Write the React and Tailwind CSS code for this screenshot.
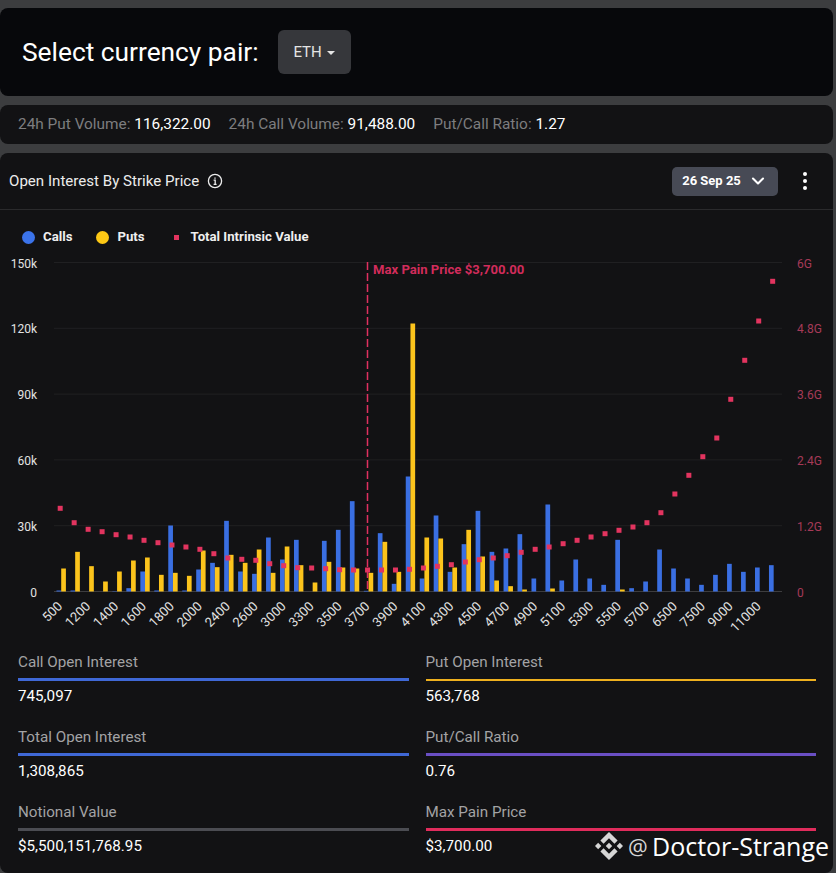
import { ChevronDown } from 'lucide-react';

// call, put bar height (in thirds of a px) and y of the intrinsic value dot
const strikes = [
    [3, 69, 508.3], [3, 119, 522.7], [0, 76, 529.3], [0, 30, 531.7], [1, 60, 534.7], [10, 93, 537],
    [60, 102, 540.3], [3, 50, 542.7], [198, 56, 545], [3, 47, 547], [66, 123, 549.3], [86, 73, 553.7],
    [212, 110, 558], [60, 86, 559.3], [53, 126, 560.3], [162, 56, 563.7], [96, 135, 565.7], [155, 79, 567.7],
    [0, 27, 568], [152, 89, 568.7], [185, 72, 569.7], [271, 69, 570], [2, 56, 570], [175, 149, 570],
    [23, 59, 570], [345, 804, 569.3], [39, 162, 568], [228, 159, 566.3], [59, 72, 564.7], [142, 185, 562],
    [242, 105, 559.7], [119, 33, 558], [129, 16, 555.7], [172, 6, 552.3], [39, 0, 549.3], [261, 9, 547],
    [33, 0, 543.7], [96, 0, 540.3], [39, 0, 537], [20, 0, 533.7], [155, 6, 530.3], [10, 0, 527],
    [30, 0, 522.7], [126, 0, 512.7], [69, 0, 494], [39, 0, 475.3], [20, 0, 456.7], [50, 0, 438],
    [83, 0, 399.3], [59, 0, 360.3], [72, 0, 321], [79, 0, 281.3],
];

const xLabels = ['500', '1200', '1400', '1600', '1800', '2000', '2400', '2600', '3000', '3300', '3500', '3700', '3900', '4100', '4300', '4500', '4700', '4900', '5100', '5300', '5500', '5700', '6500', '7500', '9000', '11000'];
const leftAxis = ['150k', '120k', '90k', '60k', '30k', '0'];
const rightAxis = ['6G', '4.8G', '3.6G', '2.4G', '1.2G', '0'];

const stats = [
    { label: 'Call Open Interest', value: '745,097', line: 'h-[3px] bg-[#3f68d6]' },
    { label: 'Put Open Interest', value: '563,768', line: 'h-[2px] bg-[#eeb01e]' },
    { label: 'Total Open Interest', value: '1,308,865', line: 'h-[3px] bg-[#3f68d6]' },
    { label: 'Put/Call Ratio', value: '0.76', line: 'h-[3px] bg-[#6a4fc4]' },
    { label: 'Notional Value', value: '$5,500,151,768.95', line: 'h-[3px] bg-[#4b4c52]' },
    { label: 'Max Pain Price', value: '$3,700.00', line: 'h-[3px] bg-[#e02c5c]' },
];

// svg is placed 255px below the top of the page
const TOP = 255;
const BASE = 591.5 - TOP;
const center = (i) => 61.2 + 13.97 * i;

function Chart() {
    return (
        <svg width="833" height="385" className="block" style={{ fontFamily: 'Roboto, sans-serif' }}>
            {leftAxis.map((label, i) => {
                const y = 7.5 + i * 65.8;
                return (
                    <g key={label}>
                        <line x1="54" x2="782" y1={y} y2={y} stroke={i === 5 ? '#3d3d3f' : '#202022'} />
                        <text x="37" y={y + 5} textAnchor="end" fontSize="12" fill="#e2e2e2">{label}</text>
                        <text x="797" y={y + 5} fontSize="12" fill="#a63a58">{rightAxis[i]}</text>
                    </g>
                );
            })}
            {strikes.map(([call, put], i) => (
                <g key={i}>
                    {call > 0 && <rect x={center(i) - 4.7} y={BASE - call / 3} width="4.7" height={call / 3} fill="#3a6fe2" />}
                    {put > 0 && <rect x={center(i)} y={BASE - put / 3} width="4.7" height={put / 3} fill="#fcc41c" />}
                </g>
            ))}
            <line x1="367.5" x2="367.5" y1="7" y2={BASE} stroke="#e0305f" strokeWidth="1.5" strokeDasharray="8 3" />
            <text x="373" y="19" fontSize="13.1" fontWeight="700" fill="#d12c5b">Max Pain Price $3,700.00</text>
            {strikes.map(([, , y], i) => (
                <rect key={i} x={center(i) - 3.5} y={y - TOP - 2.5} width="5" height="5" fill="#e2345f" />
            ))}
            {xLabels.map((label, i) => {
                const x = center(i * 2) + 2;
                const y = 352;
                return (
                    <text key={label} x={x} y={y} textAnchor="end" fontSize="13" fill="#e2e2e2" transform={`rotate(-45 ${x} ${y})`}>
                        {label}
                    </text>
                );
            })}
        </svg>
    );
}

function BinanceLogo() {
    return (
        <svg viewBox="0 0 126.61 126.61" className="w-[28px] h-[28px]" fill="#d6d6d6">
            <path d="M38.73 53.2l24.59-24.58 24.6 24.6 14.3-14.31L63.32 0 24.42 38.9l14.31 14.3z" />
            <path d="M0 63.31l14.3-14.31 14.31 14.31-14.31 14.3z" />
            <path d="M38.73 73.41l24.59 24.59 24.6-24.6 14.31 14.29-38.9 38.91-38.91-38.88-.02-.02z" />
            <path d="M98 63.31l14.3-14.31 14.31 14.3-14.31 14.32z" />
            <path d="M77.83 63.3L63.32 48.78 48.81 63.28l14.51 14.5 14.51-14.47z" />
        </svg>
    );
}

export default function App() {
    return (
        <div className="relative h-[873px] overflow-hidden bg-[#3c3d3f] pt-2 pr-[3px] font-['Roboto',sans-serif]">
            {/* selector */}
            <div className="flex h-[88px] items-center gap-[19px] rounded-lg bg-[#07080b] pl-[22px]">
                <h1 className="pt-[1px] text-[26.3px] text-white">Select currency pair:</h1>
                <button className="flex h-[44px] w-[73px] items-center justify-center gap-[5px] rounded-md bg-[#36373b] text-[15px] text-[#e4e4e4]">
                    ETH
                    <span className="mt-[1px] h-0 w-0 border-x-[4.5px] border-t-[4.5px] border-x-transparent border-t-[#e4e4e4]"></span>
                </button>
            </div>

            {/* volume strip */}
            <div className="mt-[9px] flex h-[39px] items-center gap-[18px] rounded-lg bg-[#121214] pl-[18px] pt-[1px] text-[15.4px] text-[#7d7d7f]">
                <span>24h Put Volume: <span className="text-white">116,322.00</span></span>
                <span>24h Call Volume: <span className="text-white">91,488.00</span></span>
                <span>Put/Call Ratio: <span className="text-white">1.27</span></span>
            </div>

            {/* open interest */}
            <div className="mt-[9px] h-[720px] rounded-lg bg-[#121214]">
                <div className="flex h-[57px] items-center border-b border-[#2a2a2c] pl-[9px] pr-[26px]">
                    <span className="text-[15.1px] text-[#ececec]">Open Interest By Strike Price</span>
                    <svg width="16" height="16" viewBox="0 0 16 16" fill="none" stroke="#ececec" className="ml-[8px]">
                        <circle cx="8" cy="8" r="6.6" strokeWidth="1.3" />
                        <path d="M6.6 7.2H8.2V11.4M6.6 11.4H9.6M8 4.4V5.8" strokeWidth="1.3" />
                    </svg>
                    <button className="ml-auto flex h-[29px] w-[106px] items-center justify-center gap-[7px] rounded-[5px] bg-[#474a55] text-[13px] font-bold text-white">
                        26 Sep 25
                        <ChevronDown size={20} strokeWidth={2.5} />
                    </button>
                    <svg width="4" height="18" viewBox="0 0 4 18" fill="white" className="ml-[25px]">
                        <circle cx="2" cy="2" r="2" />
                        <circle cx="2" cy="9" r="2" />
                        <circle cx="2" cy="16" r="2" />
                    </svg>
                </div>

                <div className="flex h-[45px] items-center pt-[9px] pl-[22px] text-[13.2px] font-bold text-[#efefef]">
                    <span className="h-[13px] w-[13px] rounded-full bg-[#3b73ea]"></span>
                    <span className="ml-[8px]">Calls</span>
                    <span className="ml-[24px] h-[13px] w-[13px] rounded-full bg-[#fdc815]"></span>
                    <span className="ml-[8px]">Puts</span>
                    <span className="ml-[29px] h-[5px] w-[5px] bg-[#e2345f]"></span>
                    <span className="ml-[12px]">Total Intrinsic Value</span>
                </div>

                <Chart />

                <div className="grid grid-cols-2 gap-x-[17px] gap-y-[13px] pl-[18px] pr-[17px] pt-[12px]">
                    {stats.map((s) => (
                        <div key={s.label} className="h-[62px]">
                            <div className="text-[15.2px] leading-[20px] text-[#a3a3a5]">{s.label}</div>
                            <div className="mt-[6px] flex h-[3px] items-center">
                                <div className={`w-full ${s.line}`}></div>
                            </div>
                            <div className="mt-[5px] text-[15.2px] leading-[20px] text-white">{s.value}</div>
                        </div>
                    ))}
                </div>
            </div>

            {/* watermark */}
            <div className="absolute left-[595px] top-[831px] flex items-center font-['Open_Sans',sans-serif] text-[25px] leading-[30px] text-white">
                <BinanceLogo />
                <span className="ml-[5px] w-[24px] text-[22px] text-[#d6d6d6]">@</span>
                <span>Doctor-Strange</span>
            </div>
        </div>
    );
}
